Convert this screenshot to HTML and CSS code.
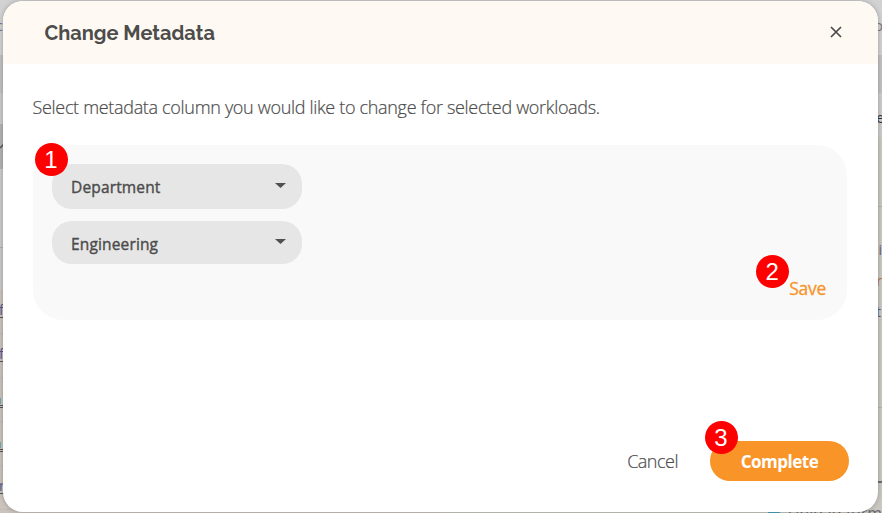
FILE: index.html
```html
<!DOCTYPE html>
<html lang="en">
<head>
<meta charset="utf-8">
<title>Change Metadata</title>
<link rel="stylesheet" href="styles.css">
</head>
<body>
<div class="page">
  <div class="rail rail-left">
    <div class="band band-bar"><span class="bit bit-blue">c</span></div>
    <div class="band band-tabs"></div>
    <div class="band band-gap"></div>
    <div class="band band-head"><svg width="5" height="8" viewBox="0 0 5 8"><path d="M0 6 5 1" stroke="#555" stroke-width="1.5" fill="none"/></svg></div>
    <div class="band band-filter"></div>
    <div class="band band-sub"></div>
    <div class="row"><span class="link">f</span></div>
    <div class="row"><span class="link">f</span></div>
    <div class="row"><span class="link teal"></span></div>
    <div class="row"><span class="link teal"></span></div>
    <div class="row"><span class="link">r</span></div>
    <div class="row"></div>
  </div>
  <div class="rail rail-right">
    <div class="band band-bar"><span class="bit bit-round">o</span></div>
    <div class="band band-tabs"></div>
    <div class="band band-label"><span class="bit bit-dark">e</span></div>
    <div class="band band-top"></div>
    <div class="band band-list"><span>i</span><span class="amber">r</span><span class="edge">t</span></div>
    <div class="band band-end"><span class="dash"></span><span class="caption"><i class="chip"></i>Upload form</span></div>
  </div>
</div>
<section class="modal" role="dialog" aria-labelledby="title">
  <header class="modal-header">
    <h1 class="title" id="title">Change Metadata</h1>
    <button class="close" aria-label="Close"><svg width="12" height="12" viewBox="0 0 12 12"><path d="M1 1 11 11M11 1 1 11" stroke="#4a4a4a" stroke-width="1.7" fill="none"/></svg></button>
  </header>
  <div class="modal-body">
    <p class="intro">Select metadata column you would like to change for selected workloads.</p>
    <div class="panel">
      <div class="select select-column"><span>Department</span><svg class="caret" width="11" height="5" viewBox="0 0 11 5"><path d="M0 0H11L5.5 5Z" fill="#505050"/></svg><span class="step step-one">1</span></div>
      <div class="select select-value"><span>Engineering</span><svg class="caret" width="11" height="5" viewBox="0 0 11 5"><path d="M0 0H11L5.5 5Z" fill="#505050"/></svg></div>
      <button class="save"><span>Save</span><span class="step step-two">2</span></button>
    </div>
  </div>
  <footer class="modal-footer">
    <button class="cancel">Cancel</button>
    <button class="complete"><span>Complete</span><span class="step step-three">3</span></button>
  </footer>
</section>
</body>
</html>
```
FILE: styles.css
```css
* { box-sizing: border-box; }
body {
  margin: 0;
  width: 882px;
  height: 513px;
  overflow: hidden;
  position: relative;
  font-family: "Open Sans", "Noto Sans", sans-serif;
  color: #4c4c4c;
}
button { border: 0; padding: 0; margin: 0; background: none; font: inherit; color: inherit; }
.page { display: grid; grid-template-columns: 441px 441px; height: 513px; background: #cbc5bf; }
.rail { display: flex; flex-direction: column; height: 513px; overflow: hidden; font-size: 14px; line-height: 18px; }
.rail-right { text-align: right; }
.band { flex: none; }
.band-bar { height: 55px; background: #d2d2d2; padding-top: 17px; }
.band-tabs { height: 38px; background: #c1c1c1; }
.band-gap { height: 31px; background: #cbcbcb; }
.band-head { height: 45px; background: #b3b3b3; padding-top: 12px; }
.band-filter { height: 79px; background: #cbcbcb; border-bottom: 1px solid #b0b0b0; }
.band-sub { height: 42px; background: #c9c9c9; }
.band-label { height: 44px; background: #cccccc; padding-top: 16px; }
.band-top { height: 70px; border-bottom: 1px solid #b3b1b0; background: #cac6c0; }
.band-list { height: 201px; border-bottom: 1px solid #b3b1b0; background: #cac6c0; padding-top: 34px; display: flex; flex-direction: column; gap: 13px; color: #62627e; }
.band-end { height: 105px; background: #cac6c0; padding-top: 73px; display: flex; flex-direction: column; align-items: flex-end; }
.dash { width: 4px; height: 2px; background: #6d6d70; flex: none; }
.caption { margin-top: 21px; color: #68686f; font-size: 16px; flex: none; }
.chip { display: inline-block; width: 12px; height: 12px; margin-right: 8px; background: #4d9fbf; }
.amber { color: #b77439; }
.edge { padding-right: 1px; }
.bit { display: block; }
.bit-blue { margin-left: -4px; color: #687b96; }
.bit-round { margin-right: -1px; color: #7b7580; }
.bit-dark { margin-right: -2px; color: #333; }
.row { flex: none; height: 44px; border-bottom: 1px solid #bcbcb9; padding-top: 12px; background: #cbc3bc; }
.link { display: block; width: 5px; margin-left: -1px; height: 16px; line-height: 16px; border-bottom: 1px solid #555; color: #59598c; }
.teal { margin-left: 0; border-bottom: 3px double #555; height: 18px; background: linear-gradient(#6fa9b8, #6fa9b8) 0 8px / 1px 6px no-repeat; }
.modal {
  position: absolute;
  left: 3px;
  top: 1px;
  width: 875px;
  height: 511px;
  border-radius: 20px;
  background: #fff;
  box-shadow: 0 0 5px rgba(0, 0, 0, .25);
  display: flex;
  flex-direction: column;
}
.modal-header { height: 63px; flex: none; border-radius: 20px 20px 0 0; background: #fef9f2; display: flex; justify-content: space-between; align-items: center; padding: 0 36px 0 41.5px; }
.title { margin: 0; font: 700 20px/28px Raleway, Lato, sans-serif; color: #4c4c4c; }
.close { display: flex; margin-bottom: 1px; }
.modal-body { flex: 1; padding: 29px 31px 0 30px; }
.intro { margin: 0 0 23px -.5px; font-size: 18px; line-height: 29px; font-weight: 300; letter-spacing: -.32px; white-space: nowrap; -webkit-text-stroke: .2px #4c4c4c; }
.panel { height: 175px; border-radius: 30px; background: #f9f9f9; padding: 19px; display: flex; flex-direction: column; }
.select { position: relative; width: 250px; display: flex; justify-content: space-between; align-items: center; padding: 1px 16px 0 19px; border-radius: 20px; background: #e6e6e6; font-size: 15.5px; letter-spacing: .15px; -webkit-text-stroke: .4px #4c4c4c; }
.select-column { height: 45px; margin-bottom: 12px; }
.select-value { height: 43px; padding-top: 3px; }
.caret { margin-bottom: 4px; }
.select-value .caret { margin-bottom: 5px; }
.save { position: relative; align-self: flex-end; margin: 12px 2px 0 0; font-size: 17.5px; line-height: 24px; letter-spacing: -.3px; color: #f79329; -webkit-text-stroke: .3px #f79329; }
.modal-footer { height: 71px; flex: none; display: flex; align-items: flex-start; justify-content: flex-end; gap: 32px; padding-right: 29px; }
.cancel { height: 40px; font-size: 18px; font-weight: 300; letter-spacing: -.5px; -webkit-text-stroke: .2px #4c4c4c; }
.complete { position: relative; width: 139px; height: 40px; border-radius: 20px; background: #f89428; color: #fff; font-size: 17px; font-weight: 700; letter-spacing: -.5px; }
.step { position: absolute; width: 33px; height: 33px; border-radius: 50%; background: #f00; color: #fff; font: 400 24px/34px "Liberation Sans", sans-serif; text-align: center; letter-spacing: 0; -webkit-text-stroke: 0; }
.step-one { left: -17.5px; top: -21px; }
.step-two { left: -33.5px; top: -21px; }
.step-three { left: -5.5px; top: -20px; }
```
